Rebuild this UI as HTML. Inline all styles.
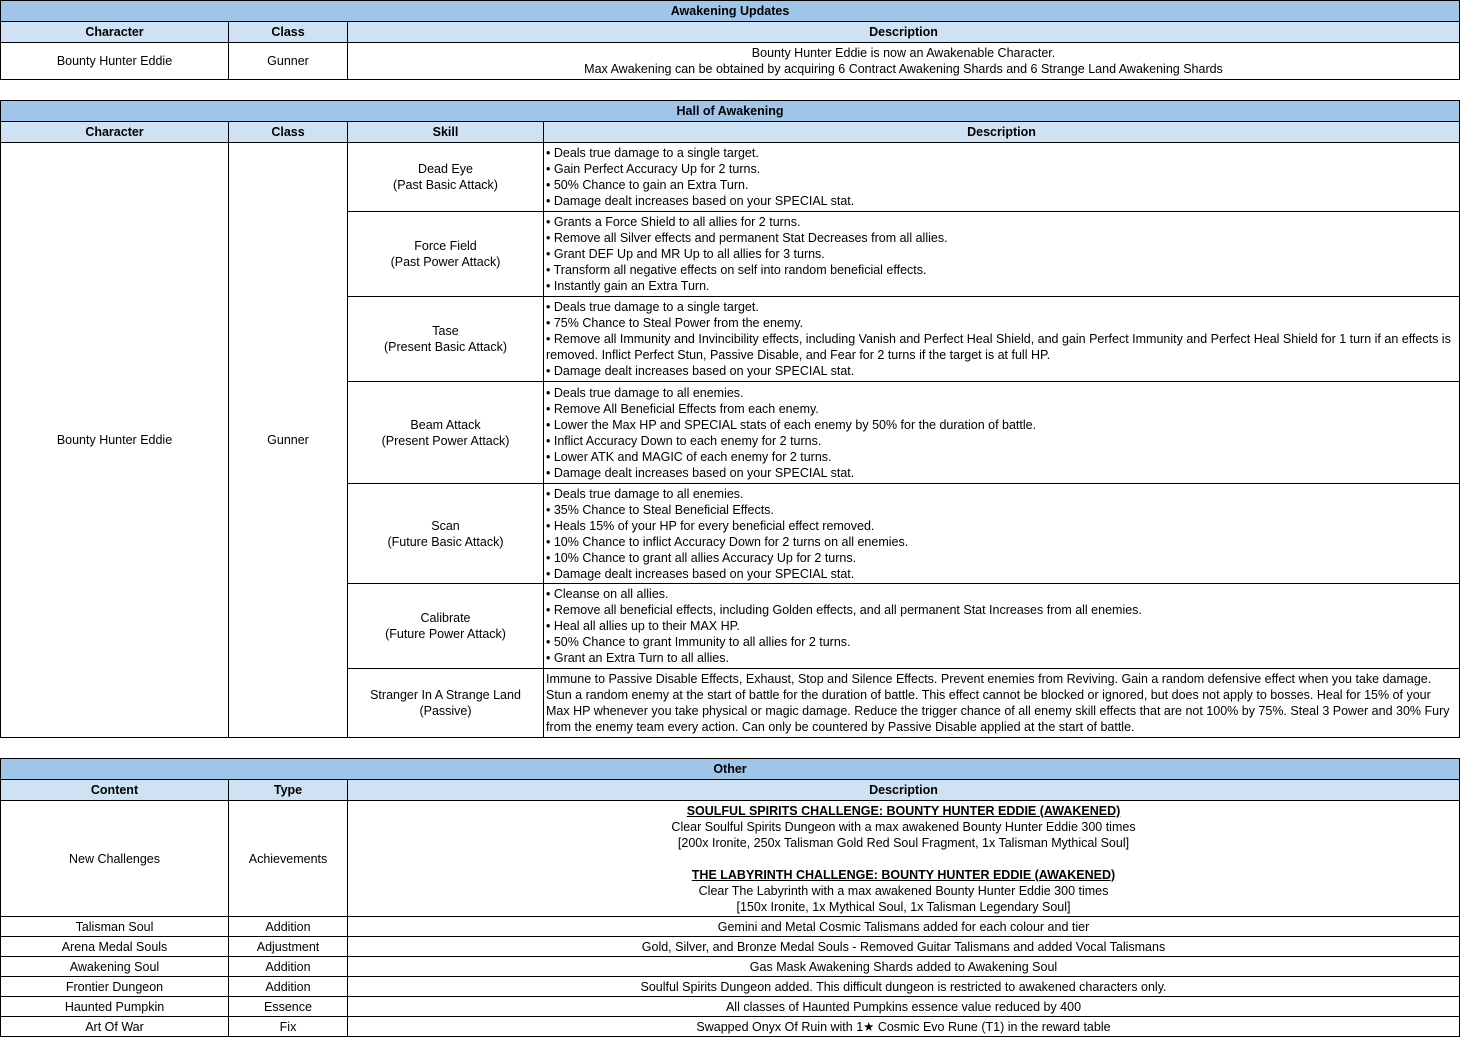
<!DOCTYPE html>
<html><head><meta charset="utf-8"><style>
body{margin:0;background:#fff;font-family:"Liberation Sans",Arial,sans-serif;font-size:12.5px;color:#000;}
table{position:absolute;left:0;width:1460px;border-collapse:collapse;table-layout:fixed;}
td{border:1px solid #000;padding:0 2px;text-align:center;vertical-align:middle;line-height:16px;overflow:hidden;white-space:nowrap;}
.t{background:#9fc5e8;font-weight:bold;height:20px;}
.h{background:#cfe2f3;font-weight:bold;height:20px;}
.l{text-align:left;white-space:normal;}
.r{height:20px;}
u{font-weight:bold;}
</style></head><body>
<table style="top:0">
<colgroup><col style="width:228px"><col style="width:119px"><col></colgroup>
<tr><td class="t" colspan="3">Awakening Updates</td></tr>
<tr><td class="h">Character</td><td class="h">Class</td><td class="h">Description</td></tr>
<tr style="height:37px"><td>Bounty Hunter Eddie</td><td>Gunner</td><td>Bounty Hunter Eddie is now an Awakenable Character.<br>Max Awakening can be obtained by acquiring 6 Contract Awakening Shards and 6 Strange Land Awakening Shards</td></tr>
</table>

<table style="top:100px">
<colgroup><col style="width:228px"><col style="width:119px"><col style="width:196px"><col></colgroup>
<tr><td class="t" colspan="4">Hall of Awakening</td></tr>
<tr><td class="h">Character</td><td class="h">Class</td><td class="h">Skill</td><td class="h">Description</td></tr>
<tr style="height:69px"><td rowspan="7">Bounty Hunter Eddie</td><td rowspan="7">Gunner</td><td>Dead Eye<br>(Past Basic Attack)</td><td class="l">• Deals true damage to a single target.<br>• Gain Perfect Accuracy Up for 2 turns.<br>• 50% Chance to gain an Extra Turn.<br>• Damage dealt increases based on your SPECIAL stat.</td></tr>
<tr style="height:85px"><td>Force Field<br>(Past Power Attack)</td><td class="l">• Grants a Force Shield to all allies for 2 turns.<br>• Remove all Silver effects and permanent Stat Decreases from all allies.<br>• Grant DEF Up and MR Up to all allies for 3 turns.<br>• Transform all negative effects on self into random beneficial effects.<br>• Instantly gain an Extra Turn.</td></tr>
<tr style="height:85px"><td>Tase<br>(Present Basic Attack)</td><td class="l">• Deals true damage to a single target.<br>• 75% Chance to Steal Power from the enemy.<br>• Remove all Immunity and Invincibility effects, including Vanish and Perfect Heal Shield, and gain Perfect Immunity and Perfect Heal Shield for 1 turn if an effects is removed. Inflict Perfect Stun, Passive Disable, and Fear for 2 turns if the target is at full HP.<br>• Damage dealt increases based on your SPECIAL stat.</td></tr>
<tr style="height:102px"><td>Beam Attack<br>(Present Power Attack)</td><td class="l">• Deals true damage to all enemies.<br>• Remove All Beneficial Effects from each enemy.<br>• Lower the Max HP and SPECIAL stats of each enemy by 50% for the duration of battle.<br>• Inflict Accuracy Down to each enemy for 2 turns.<br>• Lower ATK and MAGIC of each enemy for 2 turns.<br>• Damage dealt increases based on your SPECIAL stat.</td></tr>
<tr style="height:100px"><td>Scan<br>(Future Basic Attack)</td><td class="l">• Deals true damage to all enemies.<br>• 35% Chance to Steal Beneficial Effects.<br>• Heals 15% of your HP for every beneficial effect removed.<br>• 10% Chance to inflict Accuracy Down for 2 turns on all enemies.<br>• 10% Chance to grant all allies Accuracy Up for 2 turns.<br>• Damage dealt increases based on your SPECIAL stat.</td></tr>
<tr style="height:85px"><td>Calibrate<br>(Future Power Attack)</td><td class="l">• Cleanse on all allies.<br>• Remove all beneficial effects, including Golden effects, and all permanent Stat Increases from all enemies.<br>• Heal all allies up to their MAX HP.<br>• 50% Chance to grant Immunity to all allies for 2 turns.<br>• Grant an Extra Turn to all allies.</td></tr>
<tr style="height:69px"><td>Stranger In A Strange Land<br>(Passive)</td><td class="l">Immune to Passive Disable Effects, Exhaust, Stop and Silence Effects. Prevent enemies from Reviving. Gain a random defensive effect when you take damage. Stun a random enemy at the start of battle for the duration of battle. This effect cannot be blocked or ignored, but does not apply to bosses. Heal for 15% of your Max HP whenever you take physical or magic damage. Reduce the trigger chance of all enemy skill effects that are not 100% by 75%. Steal 3 Power and 30% Fury from the enemy team every action. Can only be countered by Passive Disable applied at the start of battle.</td></tr>
</table>

<table style="top:758px">
<colgroup><col style="width:228px"><col style="width:119px"><col></colgroup>
<tr><td class="t" colspan="3">Other</td></tr>
<tr><td class="h">Content</td><td class="h">Type</td><td class="h">Description</td></tr>
<tr style="height:116px"><td>New Challenges</td><td>Achievements</td><td><u>SOULFUL SPIRITS CHALLENGE: BOUNTY HUNTER EDDIE (AWAKENED)</u><br>Clear Soulful Spirits Dungeon with a max awakened Bounty Hunter Eddie 300 times<br>[200x Ironite, 250x Talisman Gold Red Soul Fragment, 1x Talisman Mythical Soul]<br><br><u>THE LABYRINTH CHALLENGE: BOUNTY HUNTER EDDIE (AWAKENED)</u><br>Clear The Labyrinth with a max awakened Bounty Hunter Eddie 300 times<br>[150x Ironite, 1x Mythical Soul, 1x Talisman Legendary Soul]</td></tr>
<tr class="r"><td>Talisman Soul</td><td>Addition</td><td>Gemini and Metal Cosmic Talismans added for each colour and tier</td></tr>
<tr class="r"><td>Arena Medal Souls</td><td>Adjustment</td><td>Gold, Silver, and Bronze Medal Souls - Removed Guitar Talismans and added Vocal Talismans</td></tr>
<tr class="r"><td>Awakening Soul</td><td>Addition</td><td>Gas Mask Awakening Shards added to Awakening Soul</td></tr>
<tr class="r"><td>Frontier Dungeon</td><td>Addition</td><td>Soulful Spirits Dungeon added. This difficult dungeon is restricted to awakened characters only.</td></tr>
<tr class="r"><td>Haunted Pumpkin</td><td>Essence</td><td>All classes of Haunted Pumpkins essence value reduced by 400</td></tr>
<tr class="r"><td>Art Of War</td><td>Fix</td><td>Swapped Onyx Of Ruin with 1★ Cosmic Evo Rune (T1) in the reward table</td></tr>
</table>
</body></html>
